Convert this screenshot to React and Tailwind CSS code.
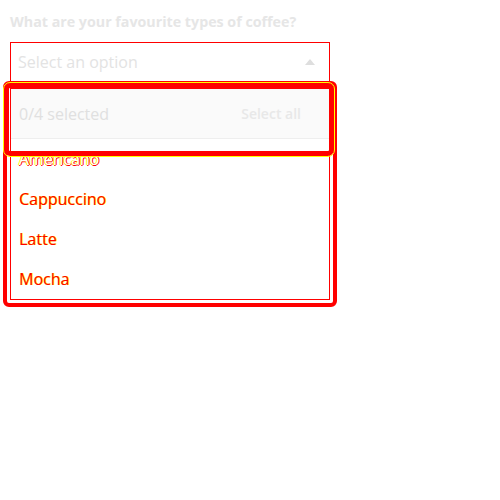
import React from "react";

const options = ["Americano", "Cappuccino", "Latte", "Mocha"];

const App = () => {
  return (
    <div className="relative w-[500px] h-[500px] bg-white font-['Open_Sans',sans-serif] px-[10px] pt-[13px]">
      <label className="block text-[14.25px] leading-[18px] font-bold text-[#e6e6e6]">
        What are your favourite types of coffee?
      </label>

      <div className="mt-[11px] w-[320px] h-[40px] border border-[#ff0000] flex items-center justify-between pl-[7px] pr-[14px]">
        <span className="text-[16px] text-[#e3e3e3]">Select an option</span>
        <svg width="10" height="6" viewBox="0 0 10 6">
          <path d="M0 6 L5 0 L10 6 Z" fill="#dedede" />
        </svg>
      </div>

      <div className="mt-[6px] w-[320px] border border-[#ff0000] bg-white">
        <div className="h-[50px] bg-[#fafafa] border-b border-[#eeeeee] flex items-center justify-between pl-[8px] pr-[28px]">
          <span className="text-[16px] text-[#e0e0e0]">0/4 selected</span>
          <span className="text-[14px] font-semibold text-[#e8e8e8]">Select all</span>
        </div>
        <ul>
          {options.map((opt, i) => (
            <li
              key={opt}
              className={
                i === 0
                  ? "h-[40px] flex items-center pl-[8px] text-[16px] text-white [text-shadow:1px_0_0_#ff0000,-1px_0_0_#ffff00,0_1px_0_#ff0000]"
                  : "h-[40px] flex items-center pl-[8px] text-[16px] text-[#ff0000] [text-shadow:1px_0_0_#ffff00]"
              }
            >
              {opt}
            </li>
          ))}
        </ul>
      </div>

      {/* highlight boxes drawn over the dropdown */}
      <div className="absolute left-[3px] top-[81px] w-[334px] h-[226px] border-[4px] border-[#ff0000] rounded-[6px] pointer-events-none" />
      <div className="absolute left-[4px] top-[83px] w-[330px] h-[73px] border-[5px] border-[#ff0000] rounded-[6px] outline outline-1 outline-[#ffff00] pointer-events-none" />
    </div>
  );
};

export default App;
